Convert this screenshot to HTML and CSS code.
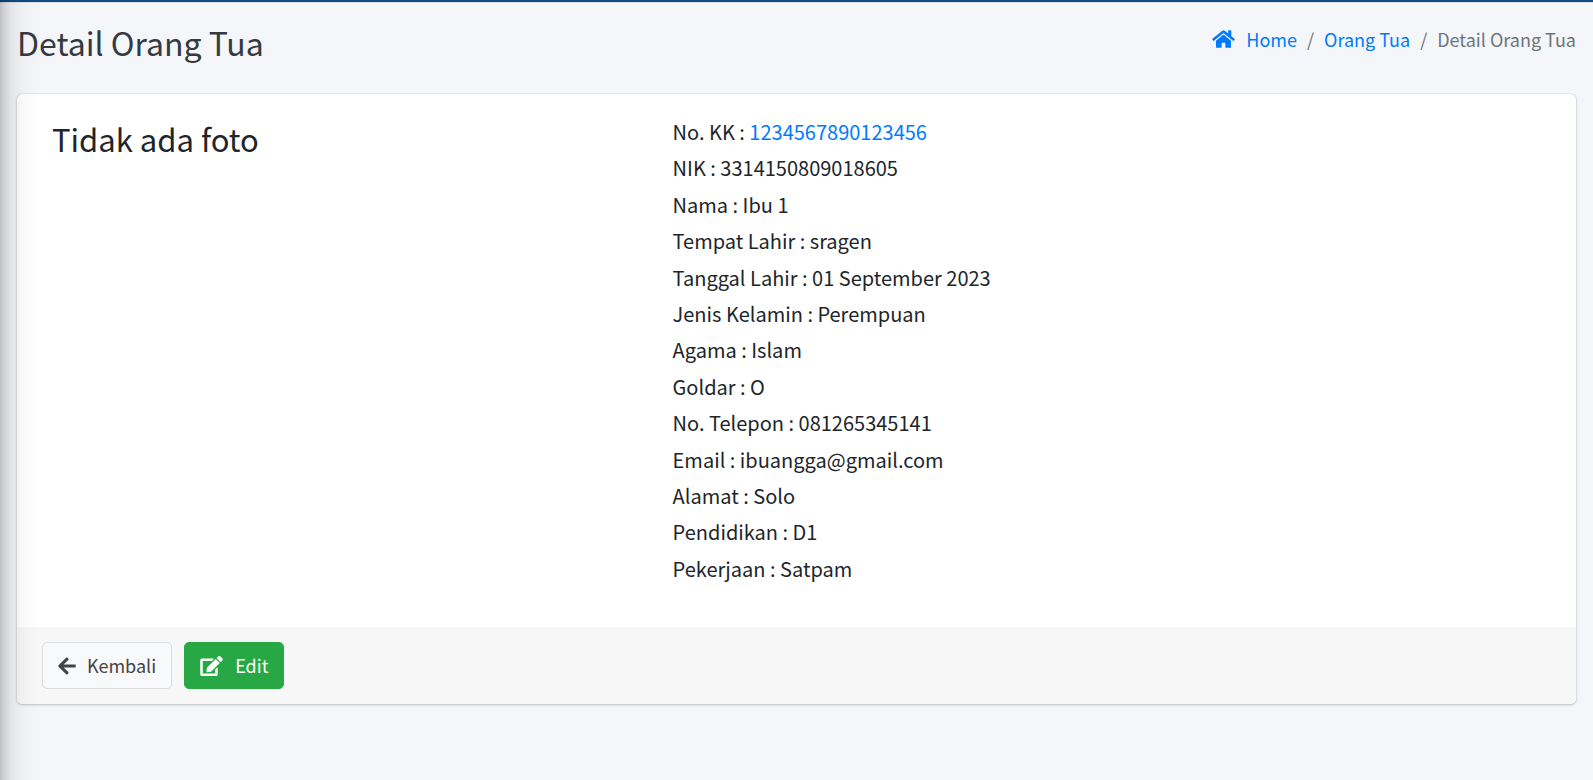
FILE: index.html
```
<!DOCTYPE html>
<html lang="id">
<head>
<meta charset="utf-8">
<meta name="viewport" content="width=device-width, initial-scale=1">
<title>Detail Orang Tua</title>
<link rel="stylesheet" href="styles.css">
</head>
<body>
<div class="topbar"></div>
<div class="sidebar-edge"></div>
<header class="page-header">
  <h1 class="page-title">Detail Orang Tua</h1>
  <nav aria-label="Breadcrumb">
    <ol class="breadcrumb">
      <li><svg class="icon icon-home" viewBox="0 0 576 512" aria-hidden="true"><path d="M280.37 148.26L96 300.11V464a16 16 0 0 0 16 16l112.06-.29a16 16 0 0 0 15.92-16V368a16 16 0 0 1 16-16h64a16 16 0 0 1 16 16v95.64a16 16 0 0 0 16 16.05L464 480a16 16 0 0 0 16-16V300L295.67 148.26a12.19 12.19 0 0 0-15.3 0zM571.6 251.47L488 182.56V44.05a12 12 0 0 0-12-12h-56a12 12 0 0 0-12 12v72.61L318.47 43a48 48 0 0 0-61 0L4.34 251.47a12 12 0 0 0-1.6 16.9l25.5 31A12 12 0 0 0 45.15 301l235.22-193.74a12.19 12.19 0 0 1 15.3 0L530.9 301a12 12 0 0 0 16.9-1.6l25.5-31a12 12 0 0 0-1.7-16.93z"/></svg><a href="#">Home</a></li>
      <li><a href="#">Orang Tua</a></li>
      <li aria-current="page">Detail Orang Tua</li>
    </ol>
  </nav>
</header>
<main class="content">
  <section class="card">
    <div class="card-body">
      <div class="photo"><h2 class="photo-empty">Tidak ada foto</h2></div>
      <ul class="details">
        <li>No. KK : <a href="#">1234567890123456</a></li>
        <li>NIK : 3314150809018605</li>
        <li>Nama : Ibu 1</li>
        <li>Tempat Lahir : sragen</li>
        <li>Tanggal Lahir : 01 September 2023</li>
        <li>Jenis Kelamin : Perempuan</li>
        <li>Agama : Islam</li>
        <li>Goldar : O</li>
        <li>No. Telepon : 081265345141</li>
        <li>Email : ibuangga@gmail.com</li>
        <li>Alamat : Solo</li>
        <li>Pendidikan : D1</li>
        <li>Pekerjaan : Satpam</li>
      </ul>
    </div>
    <footer class="card-footer">
      <button type="button" class="btn btn-light"><svg class="icon icon-arrow" viewBox="0 0 448 512" aria-hidden="true"><path d="M257.5 445.1l-22.2 22.2c-9.4 9.4-24.6 9.4-33.9 0L7 273c-9.4-9.4-9.4-24.6 0-33.9L201.4 44.7c9.4-9.4 24.6-9.4 33.9 0l22.2 22.2c9.5 9.5 9.3 25-.4 34.3L136.6 216H424c13.3 0 24 10.7 24 24v32c0 13.3-10.7 24-24 24H136.6l120.5 114.8c9.8 9.3 10 24.8.4 34.3z"/></svg>Kembali</button>
      <button type="button" class="btn btn-success"><svg class="icon icon-edit" viewBox="0 0 576 512" aria-hidden="true"><path d="M402.6 83.2l90.2 90.2c3.8 3.8 3.8 10 0 13.8L274.4 405.6l-92.8 10.3c-12.4 1.4-22.9-9.1-21.5-21.5l10.3-92.8L388.8 83.2c3.8-3.8 10-3.8 13.8 0zm162-22.9l-48.8-48.8c-15.2-15.2-39.9-15.2-55.2 0l-35.4 35.4c-3.8 3.8-3.8 10 0 13.8l90.2 90.2c3.8 3.8 10 3.8 13.8 0l35.4-35.4c15.2-15.3 15.2-40 0-55.2zM384 346.2V448H64V128h229.8c3.2 0 6.2-1.3 8.5-3.5l40-40c7.6-7.6 2.2-20.5-8.5-20.5H48C21.5 64 0 85.5 0 112v352c0 26.5 21.5 48 48 48h352c26.5 0 48-21.5 48-48V306.2c0-10.7-12.9-16-20.5-8.5l-40 40c-2.2 2.3-3.5 5.3-3.5 8.5z"/></svg>Edit</button>
    </footer>
  </section>
</main>
</body>
</html>
```
FILE: styles.css
```
* { box-sizing: border-box; }

body {
  margin: 0;
  min-height: 100vh;
  overflow-x: hidden;
  background: #f4f6f9;
  color: #212529;
  font-family: "Noto Sans CJK SC", "Noto Sans", sans-serif;
  font-size: 18px;
  line-height: 30px;
}

a { color: #007bff; text-decoration: none; }

.topbar {
  height: 3px;
  background: #114b84;
  border-bottom: 1px solid #dee2e6;
}

/* Off-canvas sidebar; only its shadow reaches the page. */
.sidebar-edge {
  position: fixed;
  top: -60px;
  bottom: -60px;
  left: -300px;
  width: 300px;
  z-index: 10;
  pointer-events: none;
  box-shadow: 0 18px 35px rgba(0, 0, 0, .25), 0 12px 12px rgba(0, 0, 0, .22);
}

.page-header {
  display: flex;
  justify-content: space-between;
  align-items: flex-start;
  padding: 18px 17px 31px;
}

.page-title {
  margin: 0;
  color: #343a40;
  font-size: 32px;
  font-weight: 400;
  line-height: 42px;
}

.breadcrumb {
  display: flex;
  flex-wrap: wrap;
  margin: 3px 0 0;
  padding: 0;
  list-style: none;
  color: #6c757d;
}

.breadcrumb li { display: flex; align-items: center; }
.breadcrumb li + li::before { content: "/"; padding: 0 10px; }

.icon { flex: none; height: 20px; fill: currentColor; }
.icon-home { width: 23px; margin-right: 11px; color: #007bff; }
.icon-arrow { width: 18px; margin-right: 11px; }
.icon-edit { width: 23px; margin-right: 12px; }

.content { padding: 0 17px; }

.card {
  overflow: hidden;
  border-radius: 5px;
  background: #fff;
  box-shadow: 0 0 1px rgba(0, 0, 0, .13), 0 1px 3px rgba(0, 0, 0, .2), 0 0 1px rgba(0, 0, 0, .2);
}

.card-body {
  display: grid;
  grid-template-columns: 5fr 7fr;
  padding: 23px 0 43px;
}

.photo { padding: 0 35px; }

.photo-empty {
  margin: 0;
  font-size: 31px;
  font-weight: 400;
  line-height: 44px;
}

.details {
  display: flex;
  flex-direction: column;
  justify-content: space-between;
  min-height: 467px;
  margin: 0;
  padding: 0 6px;
  list-style: none;
  font-size: 20px;
}

.card-footer {
  display: flex;
  gap: 12px;
  padding: 15px 25px;
  background: #f7f7f7;
}

.btn {
  display: inline-flex;
  align-items: center;
  padding: 8px 15px;
  border: 1px solid transparent;
  border-radius: 5px;
  font: inherit;
  line-height: 29px;
  cursor: pointer;
}

.btn-light { border-color: #ddd; background: #f8f9fa; color: #444; }
.btn-success { border-color: #28a745; background: #28a745; color: #fff; }
```
